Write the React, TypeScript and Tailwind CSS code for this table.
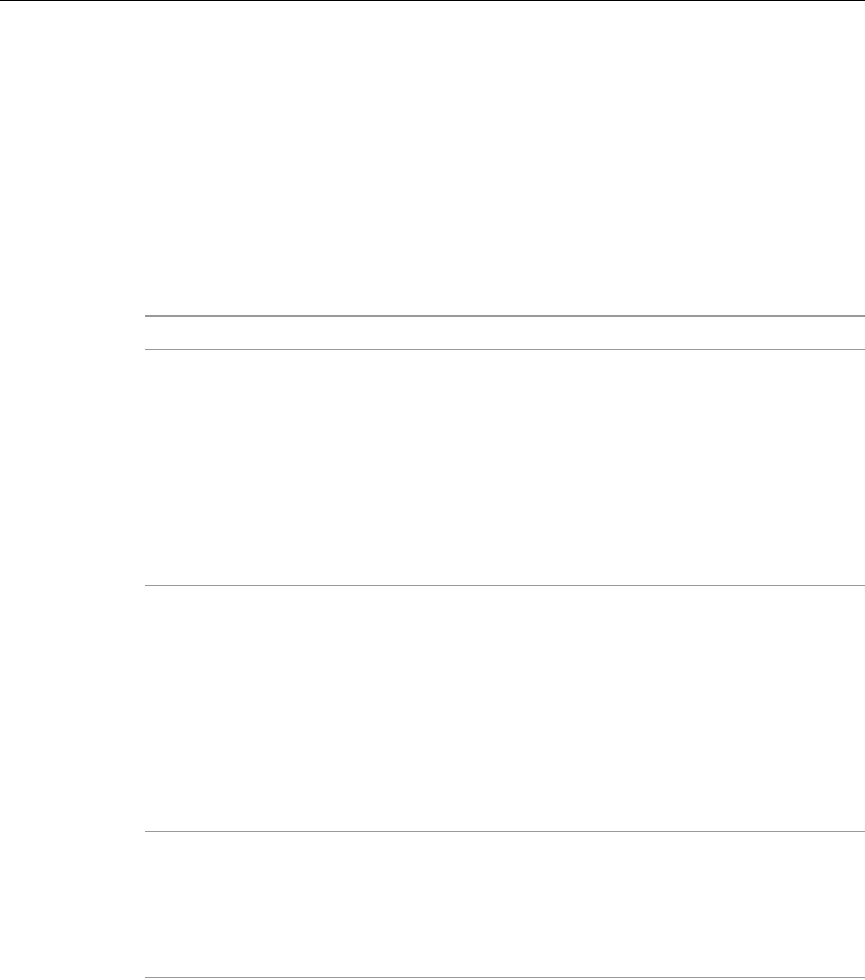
export default function App() {
  // row heights include the 1px bottom rule
  const rows = [33, 236, 246, 146]

  return (
    <div className="min-h-[980px] bg-white border-t border-black font-['Liberation_Sans',sans-serif]">
      <div className="pl-[145px] pt-[314px]">
        {/* table head rule */}
        <div className="border-t-2 border-[#999]" />
        {rows.map((h, i) => (
          <div key={i} className="border-b border-[#999]" style={{ height: h }} />
        ))}
      </div>
    </div>
  )
}
